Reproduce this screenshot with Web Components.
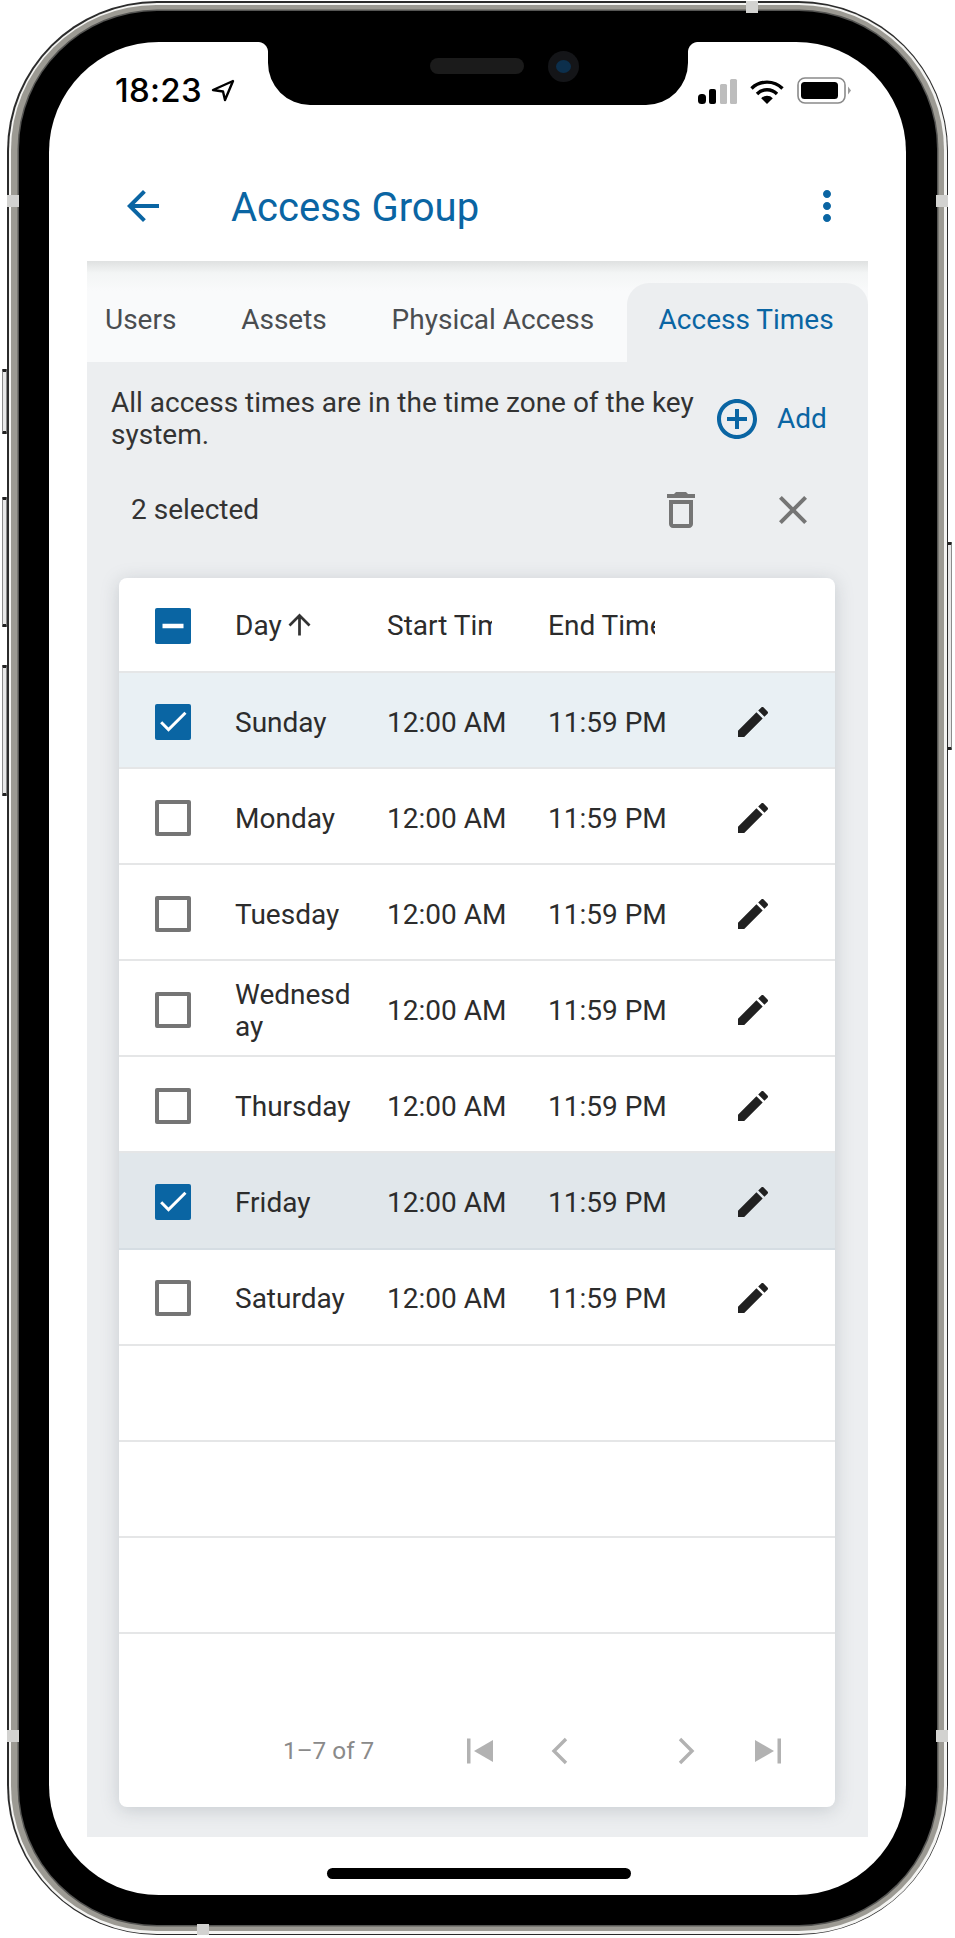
<!DOCTYPE html>
<html lang="en">
<head>
<meta charset="utf-8">
<title>Access Group</title>
<style>
  html, body { margin: 0; background: #fff; }
  body { width: 955px; height: 1938px; overflow: hidden; font-family: Roboto, "Liberation Sans", sans-serif; }
</style>
</head>
<body>
<phone-frame>
  <status-bar></status-bar>
  <app-toolbar title="Access Group"></app-toolbar>
  <access-panel>
    <tab-strip slot="tabs"></tab-strip>
    <info-row slot="info">All access times are in the time zone of the key system.</info-row>
    <selection-bar slot="selection" count="2"></selection-bar>
    <times-table slot="table">
      <times-row day="Sunday" selected="light"></times-row>
      <times-row day="Monday"></times-row>
      <times-row day="Tuesday"></times-row>
      <times-row day="Wednesday"></times-row>
      <times-row day="Thursday"></times-row>
      <times-row day="Friday" selected="dark"></times-row>
      <times-row day="Saturday"></times-row>
    </times-table>
  </access-panel>
</phone-frame>

<script>
/**
 * html is a template tag used to construct a <template>.
 */
function html(htmlString, ...values) {
  const template = document.createElement("template");
  template.innerHTML = String.raw(htmlString, ...values);
  return template;
}

const ICONS = {
  back: "M20 11H7.83l5.59-5.59L12 4l-8 8 8 8 1.41-1.41L7.83 13H20v-2z",
  add: "M13 7h-2v4H7v2h4v4h2v-4h4v-2h-4V7zm-1-5C6.48 2 2 6.48 2 12s4.48 10 10 10 10-4.48 10-10S17.52 2 12 2zm0 18c-4.41 0-8-3.59-8-8s3.59-8 8-8 8 3.59 8 8-3.59 8-8 8z",
  trash: "M6 19c0 1.1.9 2 2 2h8c1.1 0 2-.9 2-2V7H6v12zM8 9h8v10H8V9zm7.5-5l-1-1h-5l-1 1H5v2h14V4z",
  close: "M19 6.41L17.59 5 12 10.59 6.41 5 5 6.41 10.59 12 5 17.59 6.41 19 12 13.41 17.59 19 19 17.59 13.41 12z",
  edit: "M3 17.25V21h3.75L17.81 9.94l-3.75-3.75L3 17.25zM20.71 7.04c.39-.39.39-1.02 0-1.41l-2.34-2.34c-.39-.39-1.02-.39-1.41 0l-1.83 1.83 3.75 3.75 1.83-1.83z",
  up: "M4 12l1.41 1.41L11 7.83V20h2V7.83l5.58 5.59L20 12l-8-8-8 8z",
  more: "M12 8c1.1 0 2-.9 2-2s-.9-2-2-2-2 .9-2 2 .9 2 2 2zm0 2c-1.1 0-2 .9-2 2s.9 2 2 2 2-.9 2-2-.9-2-2-2zm0 6c-1.1 0-2 .9-2 2s.9 2 2 2 2-.9 2-2-.9-2-2-2z"
};

class AppIcon extends HTMLElement {
  constructor() {
    super();
    const size = this.getAttribute("size") || 48;
    const d = ICONS[this.getAttribute("name")];
    this.attachShadow({ mode: "open" }).innerHTML = `
      <style>
        :host { display: block; flex: none; width: ${size}px; height: ${size}px; }
        svg { display: block; width: 100%; height: 100%; fill: currentColor; }
      </style>
      <svg viewBox="0 0 24 24"><path d="${d}"/></svg>`;
  }
}
customElements.define("app-icon", AppIcon);

const phoneTemplate = html`
  <style>
    * { box-sizing: border-box; }
    :host { display: block; position: relative; width: 955px; height: 1938px; }
    .edge { position: absolute; left: 7px; top: 1px; width: 941px; height: 1934px; padding: 1.5px; border-radius: 150px; background: #2b2b2b; }
    .shine { height: 100%; padding: 2.5px; border-radius: 148px; background: #f4f4f2; }
    .steel { height: 100%; padding: 6px 7.5px; border-radius: 145px; background: #9c9a93; }
    .bezel { height: 100%; padding: 31px 30.5px 30px; border-radius: 138px; background: #000; box-shadow: 0 0 0 1.5px #565654; }
    .screen { position: relative; height: 100%; display: flex; flex-direction: column; overflow: hidden; border-radius: 110px; background: #fff; }
    .notch { position: absolute; left: 219px; top: 0; width: 420px; height: 63px; background: #000; border-radius: 0 0 42px 42px; }
    .notch::before, .notch::after { content: ""; position: absolute; top: 0; width: 10px; height: 10px; }
    .notch::before { left: -10px; background: radial-gradient(circle at 0 100%, transparent 9.5px, #000 10.5px); }
    .notch::after { right: -10px; background: radial-gradient(circle at 100% 100%, transparent 9.5px, #000 10.5px); }
    .speaker { position: absolute; left: 162px; top: 16px; width: 94px; height: 16px; border-radius: 8px; background: #1b1b1b; }
    .camera { position: absolute; left: 280px; top: 9px; width: 31px; height: 31px; border-radius: 50%; background: #141518; }
    .camera::after { content: ""; position: absolute; left: 8px; top: 9px; width: 15px; height: 13px; border-radius: 50%; background: #0c2f4c; }
    .home { flex: none; align-self: center; width: 304px; height: 11px; margin: 31px 0 0 2px; border-radius: 6px; background: #000; }
    .btn { position: absolute; width: 5px; border: 1px solid #8c8c8c; border-radius: 1px; background: #e8e8e8; border-top: 3px solid #222; border-bottom: 3px solid #222; }
    .band { position: absolute; background: #d2d2d0; }
  </style>
  <div class="btn" style="left:2px;top:369px;height:65px"></div>
  <div class="btn" style="left:2px;top:497px;height:130px"></div>
  <div class="btn" style="left:2px;top:665px;height:131px"></div>
  <div class="btn" style="left:947px;top:542px;height:208px"></div>
  <div class="edge">
    <div class="shine"><div class="steel"><div class="bezel">
      <div class="screen">
        <slot></slot>
        <div class="home"></div>
        <div class="notch"><div class="speaker"></div><div class="camera"></div></div>
      </div>
    </div></div></div>
  </div>
  <div class="band" style="left:7px;top:195px;width:12px;height:12px"></div>
  <div class="band" style="left:936px;top:195px;width:12px;height:12px"></div>
  <div class="band" style="left:746px;top:1px;width:12px;height:12px"></div>
  <div class="band" style="left:7px;top:1730px;width:12px;height:12px"></div>
  <div class="band" style="left:936px;top:1730px;width:12px;height:12px"></div>
  <div class="band" style="left:197px;top:1924px;width:12px;height:11px"></div>
`;

class PhoneFrame extends HTMLElement {
  constructor() {
    super();
    this.attachShadow({ mode: "open" }).appendChild(phoneTemplate.content.cloneNode(true));
  }
}
customElements.define("phone-frame", PhoneFrame);

const statusTemplate = html`
  <style>
    :host { display: flex; flex: none; align-items: center; height: 100px; padding: 33px 54px 37px 66px; box-sizing: border-box; color: #000; }
    .time { font: 500 33px/30px Inter, "Liberation Sans", sans-serif; letter-spacing: .3px; }
    .loc { margin: 1px 0 0 9px; }
    .right { display: flex; align-items: flex-end; margin-left: auto; gap: 12px; }
    svg { display: block; }
  </style>
  <span class="time">18:23</span>
  <svg class="loc" width="24" height="23" viewBox="0 0 24 23"><path d="M22 2 2 11l10 1.5L14 21z" fill="none" stroke="#000" stroke-width="2.4" stroke-linejoin="round"/></svg>
  <div class="right">
    <svg width="40" height="25" viewBox="0 0 40 25">
      <rect x="0" y="15" width="8" height="10" rx="3.5"/>
      <rect x="11" y="10" width="7" height="15" rx="2"/>
      <rect x="22" y="5" width="7" height="20" rx="1.5" fill="#bdbdbd"/>
      <rect x="32" y="0" width="7" height="25" rx="1.5" fill="#bdbdbd"/>
    </svg>
    <svg width="34" height="25" viewBox="0 0 34 25">
      <g fill="none" stroke="#000" stroke-width="3.4">
        <path d="M1.5 9.5a22 22 0 0 1 31 0"/>
        <path d="M7 15a14 14 0 0 1 20 0"/>
      </g>
      <path d="M17 25l-5.8-5.8a8 8 0 0 1 11.6 0z"/>
    </svg>
    <svg width="55" height="27" viewBox="0 0 55 27" style="margin-left:1px">
      <rect x="1" y="1" width="47" height="25" rx="7" fill="none" stroke="#8a8a8a" stroke-width="1.6"/>
      <rect x="4" y="5" width="37" height="17" rx="3.5"/>
      <path d="M51 9.5l3 4-3 4z" fill="#9a9a9a"/>
    </svg>
  </div>
`;

class StatusBar extends HTMLElement {
  constructor() {
    super();
    this.attachShadow({ mode: "open" }).appendChild(statusTemplate.content.cloneNode(true));
  }
}
customElements.define("status-bar", StatusBar);

class AppToolbar extends HTMLElement {
  constructor() {
    super();
    this.attachShadow({ mode: "open" }).innerHTML = `
      <style>
        :host { display: flex; flex: none; align-items: center; height: 119px; padding: 9px 55px 0 70px; box-sizing: border-box; color: #0a65a3; }
        h1 { flex: 1; margin: 4px 0 0 64px; font: 400 40px/48px Roboto, sans-serif; }
      </style>
      <app-icon name="back"></app-icon>
      <h1>${this.getAttribute("title")}</h1>
      <app-icon name="more"></app-icon>`;
  }
}
customElements.define("app-toolbar", AppToolbar);

const panelTemplate = html`
  <style>
    :host { display: flex; flex-direction: column; flex: none; height: 1576px; margin: 0 38px; background: #eceef0; }
  </style>
  <slot name="tabs"></slot>
  <slot name="info"></slot>
  <slot name="selection"></slot>
  <slot name="table"></slot>
`;

class AccessPanel extends HTMLElement {
  constructor() {
    super();
    this.attachShadow({ mode: "open" }).appendChild(panelTemplate.content.cloneNode(true));
  }
}
customElements.define("access-panel", AccessPanel);

const tabsTemplate = html`
  <style>
    :host { display: flex; flex: none; align-items: flex-end; height: 101px; overflow: hidden; background: linear-gradient(#dfe1e1, #f3f5f5 12px, #f9fafb 30px); font: 400 28px/32px Roboto, sans-serif; color: #4a4d50; }
    .tab { flex: none; display: flex; align-items: center; height: 79px; padding: 0 32.4px 5px; box-sizing: border-box; }
    .tab:first-of-type { margin-left: -14.4px; }
    .active { flex: 1; padding: 0 0 5px 32px; color: #0a65a3; background: #eceef0; border-radius: 22px 22px 0 0; }
  </style>
  <div class="tab">Users</div>
  <div class="tab">Assets</div>
  <div class="tab">Physical Access</div>
  <div class="tab active">Access Times</div>
`;

class TabStrip extends HTMLElement {
  constructor() {
    super();
    this.attachShadow({ mode: "open" }).appendChild(tabsTemplate.content.cloneNode(true));
  }
}
customElements.define("tab-strip", TabStrip);

const infoTemplate = html`
  <style>
    :host { display: flex; flex: none; align-items: center; height: 114px; padding-left: 24px; font: 400 28px/32px Roboto, sans-serif; color: #333; }
    .text { flex: none; width: 590px; margin-right: 12px; }
    .add { display: flex; align-items: center; gap: 16px; color: #0a65a3; }
  </style>
  <div class="text"><slot></slot></div>
  <div class="add"><app-icon name="add"></app-icon><span>Add</span></div>
`;

class InfoRow extends HTMLElement {
  constructor() {
    super();
    this.attachShadow({ mode: "open" }).appendChild(infoTemplate.content.cloneNode(true));
  }
}
customElements.define("info-row", InfoRow);

class SelectionBar extends HTMLElement {
  constructor() {
    super();
    this.attachShadow({ mode: "open" }).innerHTML = `
      <style>
        :host { display: flex; flex: none; align-items: center; gap: 64px; height: 68px; padding: 0 51px 0 44px; font: 400 28px/32px Roboto, sans-serif; color: #333; }
        span { flex: 1; }
        app-icon { color: #757575; }
      </style>
      <span>${this.getAttribute("count")} selected</span>
      <app-icon name="trash"></app-icon>
      <app-icon name="close"></app-icon>`;
  }
}
customElements.define("selection-bar", SelectionBar);

class CheckBox extends HTMLElement {
  constructor() {
    super();
    const state = this.getAttribute("state") || "off";
    const mark = state === "on"
      ? `<svg viewBox="0 0 24 24"><path fill="#fff" d="M9 16.17L4.83 12l-1.42 1.41L9 19 21 7l-1.41-1.41z" transform="translate(0 -.5)"/></svg>`
      : state === "mixed"
        ? `<svg viewBox="0 0 24 24"><rect x="5" y="10.5" width="14" height="3" fill="#fff"/></svg>`
        : "";
    this.attachShadow({ mode: "open" }).innerHTML = `
      <style>
        :host { display: block; flex: none; width: 36px; height: 36px; }
        div { width: 100%; height: 100%; box-sizing: border-box; border-radius: 2px; }
        .off { border: 4px solid #757575; background: #fff; }
        .on, .mixed { background: #0a65a3; }
        svg { display: block; width: 100%; height: 100%; }
      </style>
      <div class="${state}">${mark}</div>`;
  }
}
customElements.define("check-box", CheckBox);

class TimesRow extends HTMLElement {
  constructor() {
    super();
    const state = this.hasAttribute("selected") ? "on" : "off";
    this.attachShadow({ mode: "open" }).innerHTML = `
      <style>
        :host { display: grid; grid-template-columns: 36px 80px 152px 161px 1fr; align-items: center; height: 96.1px; padding-top: 3px; box-sizing: border-box; border-bottom: 2px solid #e5e6e7; font: 400 28px/32px Roboto, sans-serif; color: #2c2c2c; }
        :host([selected="light"]) { background: #e9f0f4; }
        :host([selected="dark"]) { background: #e1e7eb; border-bottom-color: #d5dde3; }
        check-box { grid-column: 2; }
        .day { width: 116px; margin-top: 2px; overflow-wrap: anywhere; }
        .time { margin-top: 2px; white-space: nowrap; }
        .end { display: flex; align-items: center; justify-content: space-between; padding-right: 62px; }
        app-icon { color: #212121; margin-top: -2px; }
      </style>
      <check-box state="${state}"></check-box>
      <div class="day">${this.getAttribute("day")}</div>
      <div class="time">12:00 AM</div>
      <div class="time end">11:59 PM<app-icon name="edit" size="40"></app-icon></div>`;
  }
}
customElements.define("times-row", TimesRow);

const tableTemplate = html`
  <style>
    * { box-sizing: border-box; }
    :host { display: block; flex: none; margin: 34px 33px 0 32px; height: 1229px; border-radius: 8px; background: #fff; box-shadow: 0 3px 18px rgba(120, 130, 140, .32); overflow: hidden; font: 400 28px/32px Roboto, sans-serif; color: #2c2c2c; }
    .head { display: grid; grid-template-columns: 36px 80px 152px 161px 1fr; align-items: center; height: 95px; padding-top: 3px; border-bottom: 2px solid #e5e6e7; }
    .head > :nth-child(1) { grid-column: 2; }
    .sort { display: flex; align-items: center; }
    .sort app-icon { margin: -4px 0 0 1px; color: #333; }
    .clip { width: 105px; overflow: hidden; white-space: nowrap; }
    .end { width: 107px; }
    .blank { height: 96.1px; border-bottom: 2px solid #e5e6e7; }
    .foot { display: flex; align-items: center; padding: 93px 0 0 164px; color: #8a8a8a; }
    .foot span { width: 175px; font-size: 24.3px; }
    .foot svg { display: block; flex: none; width: 44px; height: 48px; fill: #b2b2b2; stroke: #b2b2b2; }
    .foot .chev { fill: none; stroke-width: 3.4; }
  </style>
  <div class="head">
    <check-box state="mixed"></check-box>
    <div class="sort">Day<app-icon name="up" size="33"></app-icon></div>
    <div class="clip">Start Time</div>
    <div class="clip end">End Time</div>
  </div>
  <slot></slot>
  <div class="blank"></div>
  <div class="blank"></div>
  <div class="blank"></div>
  <div class="foot">
    <span>1–7 of 7</span>
    <svg viewBox="0 0 44 48" stroke-width="0"><rect x="9" y="11.5" width="3.5" height="25"/><path d="M35 13v22l-19-11z"/></svg>
    <svg class="chev" viewBox="0 0 44 48" style="margin-left:35px"><path d="M29 12 17 24l12 12"/></svg>
    <svg class="chev" viewBox="0 0 44 48" style="margin-left:84px"><path d="M15 12l12 12-12 12"/></svg>
    <svg viewBox="0 0 44 48" stroke-width="0" style="margin-left:37px"><path d="M9 13v22l19-11z"/><rect x="31.5" y="11.5" width="3.5" height="25"/></svg>
  </div>
`;

class TimesTable extends HTMLElement {
  constructor() {
    super();
    this.attachShadow({ mode: "open" }).appendChild(tableTemplate.content.cloneNode(true));
  }
}
customElements.define("times-table", TimesTable);
</script>
</body>
</html>
